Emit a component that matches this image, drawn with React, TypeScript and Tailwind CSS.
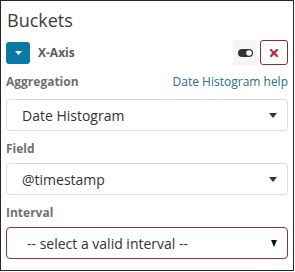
import React from "react";

const font = { fontFamily: '"Open Sans", "Noto Sans", sans-serif' };

const Caret = () => (
    <svg width="8" height="5" viewBox="0 0 8 5" className="shrink-0">
        <path d="M0 0 L8 0 L4 5 Z" fill="#333" />
    </svg>
);

const SelectBox = ({ value }: { value: string }) => (
    <div className="flex h-[32px] items-center justify-between rounded-[4px] border border-[#dcdcdc] bg-white pl-[15px] pr-[10px]">
        <span className="text-[14px] text-[#333]">{value}</span>
        <Caret />
    </div>
);

const Label = ({ children }: { children: React.ReactNode }) => (
    <div className="text-[12px] leading-[16px] font-bold text-[#6f6f6f]">{children}</div>
);

export default function App() {
    return (
        <div style={font} className="h-[271px] w-[294px] border border-[#262626] bg-white pl-[5px] pr-[5px] pt-[8px]">
            <h2 className="pl-[1px] text-[18px] leading-[22px] text-[#3c3c3c]">Buckets</h2>

            {/* Header row */}
            <div className="mt-[9px] flex h-[25px] items-center justify-between">
                <div className="flex items-center gap-[8px]">
                    <button className="flex h-[22px] w-[24px] items-center justify-center rounded-[3px] bg-[#0b79a5]">
                        <svg width="7" height="4" viewBox="0 0 7 4">
                            <path d="M0 0 L7 0 L3.5 4 Z" fill="#fff" />
                        </svg>
                    </button>
                    <span className="text-[12px] font-bold text-[#5a5a5a]">X-Axis</span>
                </div>
                <div className="flex items-center gap-[3px]">
                    <button className="flex h-[25px] w-[24px] items-center justify-center bg-[#f5f5f5]">
                        <svg width="15" height="8" viewBox="0 0 15 8">
                            <rect x="0" y="0" width="15" height="8" rx="4" fill="#333" />
                            <circle cx="11" cy="4" r="2.8" fill="#fff" />
                        </svg>
                    </button>
                    <button className="flex h-[25px] w-[28px] items-center justify-center rounded-[3px] border border-[#8c2d2d] bg-white">
                        <svg width="8" height="8" viewBox="0 0 8 8">
                            <path d="M1 1 L7 7 M7 1 L1 7" stroke="#c0282d" strokeWidth="2.2" strokeLinecap="square" />
                        </svg>
                    </button>
                </div>
            </div>

            {/* Aggregation */}
            <div className="mt-[9px] flex items-center justify-between">
                <Label>Aggregation</Label>
                <span className="text-[12px] leading-[16px] text-[#2a6f7e]">Date Histogram help</span>
            </div>
            <div className="mt-[9px]">
                <SelectBox value="Date Histogram" />
            </div>

            {/* Field */}
            <div className="mt-[10px]">
                <Label>Field</Label>
            </div>
            <div className="mt-[6px]">
                <SelectBox value="@timestamp" />
            </div>

            {/* Interval */}
            <div className="mt-[10px]">
                <Label>Interval</Label>
            </div>
            <div className="mt-[6px] flex h-[32px] items-center justify-between rounded-[4px] border border-[#8e3535] bg-white pl-[20px] pr-[10px]">
                <span className="text-[14px] text-[#333]">-- select a valid interval --</span>
                <svg width="6" height="7" viewBox="0 0 6 7">
                    <path d="M0 0 L6 0 L3 7 Z" fill="#111" />
                </svg>
            </div>
        </div>
    );
}
